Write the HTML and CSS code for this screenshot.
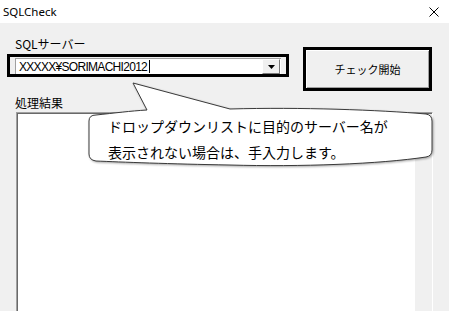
FILE: index.html
```html
<!DOCTYPE html>
<html lang="ja">
<head>
<meta charset="utf-8">
<title>SQLCheck</title>
<link rel="stylesheet" href="styles.css">
</head>
<body>
<div class="window">
  <header class="titlebar">
    <span class="title">SQLCheck</span>
    <svg class="close" viewBox="0 0 10 10" width="10" height="10"><path d="M0.5 0.5 L9.5 9.5 M9.5 0.5 L0.5 9.5" stroke="#000" stroke-width="1" fill="none"/></svg>
  </header>
  <main class="client">
    <div class="top-row">
      <div class="server-group">
        <label class="field-label">SQLサーバー</label>
        <div class="focus-ring">
          <div class="combo">
            <span class="combo-text">XXXXX¥SORIMACHI2012</span><span class="caret"></span>
            <span class="combo-btn"><svg viewBox="0 0 7 4" width="7" height="4"><path d="M0 0 H7 L3.5 4 Z" fill="#000"/></svg></span>
          </div>
        </div>
      </div>
      <button class="check-btn">チェック開始</button>
    </div>
    <div class="result-label">処理結果</div>
    <div class="result-list">
      <div class="list-area"></div>
      <div class="scroll-track"></div>
    </div>
  </main>
  <div class="callout">
    <svg class="callout-shape" viewBox="86 80 350 92" width="350" height="92">
      <path d="M147 110 L133 83 L230 109 C300 107 380 110 426 114 Q432 115 432 121 L432 150 Q432 156 426 157 C380 164 300 167 230 165 C170 164 120 162 96 161 Q89 160 89 154 L89 121 Q89 115 96 115 C115 113 130 111 147 110 Z" fill="#fff" stroke="#3a3a3a" stroke-width="1"/>
    </svg>
    <div class="callout-text">ドロップダウンリストに目的のサーバー名が<br>表示されない場合は、手入力します。</div>
  </div>
</div>
</body>
</html>
```
FILE: styles.css
```css
* { box-sizing: border-box; }
html, body { margin: 0; padding: 0; }
body {
  width: 449px;
  height: 311px;
  overflow: hidden;
  background: #f0f0f0;
  font-family: "Noto Sans CJK JP", sans-serif;
  color: #000;
}
.window { position: relative; width: 449px; height: 311px; }

.titlebar {
  height: 23px;
  background: #fff;
  display: flex;
  align-items: center;
  justify-content: space-between;
  padding: 0 10px 0 3px;
}
.title {
  font-family: "Noto Sans", sans-serif;
  font-size: 11.5px;
  line-height: 1;
}
.close { display: block; }

.top-row {
  display: flex;
  align-items: flex-start;
  padding: 13px 0 0 7px;
}
.server-group { width: 282px; }
.field-label {
  display: block;
  height: 18px;
  line-height: 16px;
  padding-left: 8px;
  font-size: 12px;
}
.focus-ring {
  height: 23px;
  border: 3px solid #000;
  padding: 1px 5px 0 5px;
}
.combo {
  height: 16px;
  display: flex;
  align-items: center;
  background: #fff;
  border-left: 1px solid #a0a0a0;
  border-top: 1px solid #a0a0a0;
}
.combo-text {
  font-family: "Liberation Sans", sans-serif;
  font-size: 12px;
  letter-spacing: -0.7px;
  padding-left: 3px;
  line-height: 14px;
}
.caret {
  width: 1px;
  height: 13px;
  background: #000;
  margin-left: 2px;
}
.combo-btn {
  margin-left: auto;
  margin-right: 1px;
  width: 18px;
  height: 15px;
  display: flex;
  align-items: center;
  justify-content: center;
  background: #f0f0f0;
  border: 1px solid;
  border-color: #fff #7a7a7a #7a7a7a #fff;
}
.combo-btn svg { display: block; }

.check-btn {
  margin: 11px 0 0 14px;
  width: 129px;
  height: 44px;
  padding: 0;
  border: 3px solid #000;
  background: #f0f0f0;
  box-shadow: inset 1px 1px #fff, inset -1px -1px #a0a0a0;
  font-family: "Noto Sans CJK JP", sans-serif;
  font-size: 11px;
  color: #000;
}

.result-label {
  margin-top: 4px;
  padding-left: 15px;
  height: 16px;
  font-size: 12px;
  line-height: 16px;
}
.result-list {
  margin: 1px 0 0 16px;
  width: 417px;
  height: 210px;
  display: flex;
  background: #696969;
  padding: 1px 0 0 1px;
  border-left: 1px solid #a0a0a0;
  border-top: 1px solid #a0a0a0;
  border-right: 1px solid #fff;
}
.list-area { flex: 1; background: #fff; }
.scroll-track { width: 17px; background: #f0f0f0; }

.callout {
  position: absolute;
  left: 86px;
  top: 80px;
  width: 350px;
  height: 92px;
}
.callout-shape {
  position: absolute;
  left: 0;
  top: 0;
  filter: drop-shadow(1px 1px 1px rgba(0, 0, 0, 0.35));
}
.callout-text {
  position: relative;
  padding: 33px 0 0 22px;
  font-size: 14px;
  line-height: 26px;
  white-space: nowrap;
}
```
